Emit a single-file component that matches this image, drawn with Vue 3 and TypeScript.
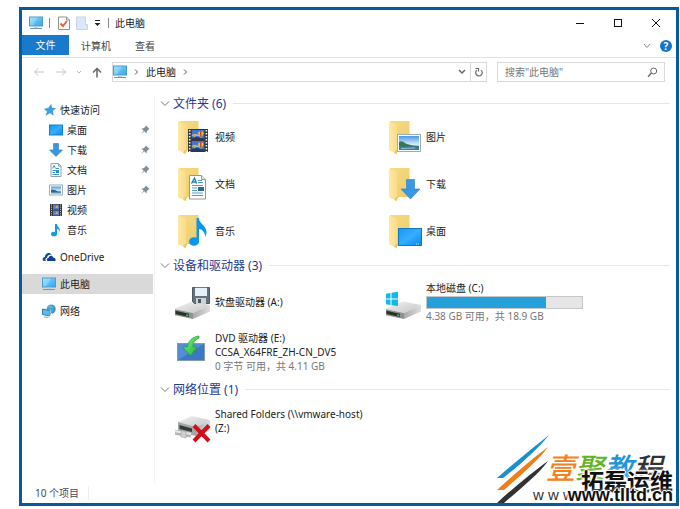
<script setup lang="ts">
interface NavItem {
  label: string
  icon: string
  pinned?: boolean
}

interface Tile {
  icon: string
  lines: string[]
  detail?: string
  used?: number
}

interface Group {
  title: string
  kind: string
  tiles: Tile[]
}

const quickAccess: NavItem[] = [
  { label: '桌面', icon: 's-desktop', pinned: true },
  { label: '下载', icon: 's-download', pinned: true },
  { label: '文档', icon: 's-doc', pinned: true },
  { label: '图片', icon: 's-picture', pinned: true },
  { label: '视频', icon: 's-video' },
  { label: '音乐', icon: 's-music' },
]

const groups: Group[] = [
  {
    title: '文件夹 (6)',
    kind: 'folders',
    tiles: [
      { icon: 'l-video', lines: ['视频'] },
      { icon: 'l-picture', lines: ['图片'] },
      { icon: 'l-doc', lines: ['文档'] },
      { icon: 'l-download', lines: ['下载'] },
      { icon: 'l-music', lines: ['音乐'] },
      { icon: 'l-desktop', lines: ['桌面'] },
    ],
  },
  {
    title: '设备和驱动器 (3)',
    kind: 'devices',
    tiles: [
      { icon: 'l-floppy', lines: ['软盘驱动器 (A:)'] },
      { icon: 'l-system', lines: ['本地磁盘 (C:)'], used: 77, detail: '4.38 GB 可用，共 18.9 GB' },
      { icon: 'l-dvd', lines: ['DVD 驱动器 (E:)', 'CCSA_X64FRE_ZH-CN_DV5'], detail: '0 字节 可用，共 4.11 GB' },
    ],
  },
  {
    title: '网络位置 (1)',
    kind: 'network',
    tiles: [{ icon: 'l-netdrive', lines: ['Shared Folders (\\\\vmware-host)', '(Z:)'] }],
  },
]
</script>

<template>
  <svg class="defs" aria-hidden="true">
    <defs>
      <linearGradient id="g-screen" x1="0" y1="0" x2="1" y2="1">
        <stop offset="0" stop-color="#8fdcff" /><stop offset=".5" stop-color="#5cc0f4" /><stop offset="1" stop-color="#3aa4e4" />
      </linearGradient>
      <linearGradient id="g-desk" x1="0" y1="0" x2="1" y2="1">
        <stop offset="0" stop-color="#1698f5" /><stop offset=".5" stop-color="#36adff" /><stop offset="1" stop-color="#078af0" />
      </linearGradient>
      <linearGradient id="g-back" x1="0" y1="0" x2="1" y2="1">
        <stop offset="0" stop-color="#f6dc85" /><stop offset="1" stop-color="#efcb69" />
      </linearGradient>
      <linearGradient id="g-front" x1="0" y1="0" x2="1" y2="0">
        <stop offset="0" stop-color="#ffe9a6" /><stop offset="1" stop-color="#fbdc88" />
      </linearGradient>
      <linearGradient id="g-top" x1="0" y1="0" x2="1" y2="1">
        <stop offset="0" stop-color="#f3f3f3" /><stop offset="1" stop-color="#c4c4c6" />
      </linearGradient>
      <linearGradient id="g-side" x1="0" y1="0" x2="1" y2="0">
        <stop offset="0" stop-color="#a9a9ab" /><stop offset="1" stop-color="#dededf" />
      </linearGradient>
      <linearGradient id="g-sky" x1="0" y1="0" x2="0" y2="1">
        <stop offset="0" stop-color="#4a9ae6" /><stop offset=".6" stop-color="#d4ecfa" /><stop offset="1" stop-color="#5793bd" />
      </linearGradient>
      <linearGradient id="g-green" x1="0" y1="0" x2="1" y2="1">
        <stop offset="0" stop-color="#8df08c" /><stop offset="1" stop-color="#12b52b" />
      </linearGradient>
    </defs>

    <symbol id="monitor" viewBox="0 0 14 14">
      <rect x=".5" y="1" width="13" height="9" fill="url(#g-screen)" stroke="#4b9cc8" />
      <path d="M1 1.500H9L4 9.500H1Z" fill="#fff" opacity=".22" />
      <path d="M5 10.500H9V12H5Z" fill="#b9d1df" /><path d="M1 12.500H13" stroke="#7797a8" />
    </symbol>
    <symbol id="s-desktop" viewBox="0 0 14 14"><rect x=".5" y="2" width="13" height="10" fill="url(#g-desk)" stroke="#1680cf" /></symbol>
    <symbol id="s-download" viewBox="0 0 14 14"><path d="M4.500 .5H9.500V7H13.500L7 13.500L.5 7H4.500Z" fill="#3c96df" stroke="#2c7fc4" stroke-width=".6" /></symbol>
    <symbol id="s-doc" viewBox="0 0 14 14">
      <path d="M2 .5H9.500L12 3V13.500H2Z" fill="#fff" stroke="#95a2aa" /><path d="M9.500 .5V3H12" fill="none" stroke="#95a2aa" />
      <path d="M3.500 5.500L5 2.500L6.500 5.500M7 5.500H10M3.500 7.500H10M3.500 9.500H6M3.500 11.500H10" fill="none" stroke="#399cc7" />
      <rect x="7" y="8" width="3" height="2" fill="#3b84ae" />
    </symbol>
    <symbol id="s-picture" viewBox="0 0 14 14">
      <rect x=".5" y="2" width="13" height="10" fill="#fff" stroke="#9dabb3" /><rect x="2" y="3.500" width="10" height="7" fill="url(#g-sky)" />
      <path d="M2 6.500L6 7L9 8.500H12V9.500H2Z" fill="#31678a" />
    </symbol>
    <symbol id="s-video" viewBox="0 0 14 14">
      <rect x="1" y="1" width="12" height="12" fill="#34363b" /><rect x="4" y="1.500" width="6" height="5" fill="#567cc2" /><rect x="4" y="7.500" width="6" height="5" fill="#567cc2" />
      <path d="M2.500 1.500V13M11.500 1.500V13" stroke="#d6d6d6" stroke-dasharray="1 1.200" /><path d="M6 5L8 2L9.500 5ZM6 11L8 8L9.500 11Z" fill="#e1a63a" />
    </symbol>
    <symbol id="s-music" viewBox="0 0 14 14">
      <ellipse cx="5" cy="11" rx="3" ry="2.300" fill="#149be6" /><path d="M6 11V1H8C8 4 12 5 11 9C10.500 7 9.500 6 8 6V11Z" fill="#149be6" />
    </symbol>
    <symbol id="star" viewBox="0 0 12 12"><path d="M7 .5L7.700 4L11.500 4.500L8.500 6.800L9.200 11L6 8.800L2 11.200L3.500 7.500L.5 5L4.500 4.200Z" fill="#36a3e8" stroke="#2280c3" stroke-width=".5" /></symbol>
    <symbol id="cloud" viewBox="0 0 14 14">
      <path d="M1 10.500C0 8.500 1.500 7 3 7C3 3 8 1.500 9.500 5C7 4 5 6 5 8C3 8 3 10 4 11H2Z" fill="#0b4ba5" />
      <path d="M5.500 11C4 9 5.500 8 6.500 8C7 5 11 5 11 7.500C13 7.500 14 9 13.500 11Z" fill="#123f91" />
    </symbol>
    <symbol id="network" viewBox="0 0 14 14">
      <circle cx="9.200" cy="5" r="4.600" fill="#4aa6d6" /><path d="M6 2C8 1 9 4 12 3" fill="none" stroke="#7fcbea" /><path d="M10 1C13 4 13 7 10.500 9.500" fill="none" stroke="#2f81ae" />
      <path d="M.5 5L7.500 6.500V12L.5 10.500Z" fill="#5cbef0" stroke="#377ca0" /><path d="M7.500 6.500L9 5.500V11L7.500 12Z" fill="#a6c2d0" /><path d="M2 13L6.500 13.500" stroke="#8aa9b9" />
    </symbol>
    <symbol id="pin" viewBox="0 0 10 10"><path d="M6 .5L9.500 4L8.500 4.500L6.800 6.300L6.500 8.500L4.300 6.300L1 9.200L3.700 5.700L1.500 3.500L3.700 3.200L5.500 1.500Z" fill="#818c94" /></symbol>

    <symbol id="folder" viewBox="0 0 36 36">
      <path d="M4 2H23.500V31H9Z" fill="url(#g-back)" /><path d="M3 2.500L11 6V34.500L3 31.500Z" fill="url(#g-front)" />
      <path d="M8 34L11 35V33.500L12.500 31H10Z" fill="#edc65f" />
    </symbol>
    <symbol id="balloons" viewBox="0 0 13 10">
      <rect width="13" height="10" fill="#3e77cf" /><path d="M0 5L5 4L9 6H0Z" fill="#8fbfee" />
      <path d="M0 8L5 7L13 8.500V10H0Z" fill="#263a60" />
      <path d="M6.500 3.500C6.500 0 12 0 12 3.500L10 7.500H8.500Z" fill="#f0bf38" /><path d="M8.300 1H10V7H8.700Z" fill="#c54330" /><path d="M1 5.500C1 3 4.500 3 4.500 5.500L3 7.500Z" fill="#dfa34a" />
    </symbol>
    <symbol id="l-video" viewBox="0 0 36 36">
      <use href="#folder" /><rect x="13" y="10" width="20" height="23" fill="#33353a" />
      <path d="M14.700 11V33M31.400 11V33" stroke="#efefef" stroke-width="1.600" stroke-dasharray="1.600 1.400" />
      <use href="#balloons" x="16.500" y="11" width="13" height="10" /><use href="#balloons" x="16.500" y="22" width="13" height="10" />
    </symbol>
    <symbol id="l-picture" viewBox="0 0 36 36">
      <use href="#folder" /><rect x="11.500" y="15.500" width="23" height="17" fill="#fff" stroke="#9fabb2" />
      <rect x="13" y="17" width="20" height="14" fill="url(#g-sky)" /><path d="M13 23C16 21 18 24 21 25C25 26 28 27 33 27V28H13Z" fill="#397653" /><path d="M13 27.500H33V31H13Z" fill="#397ca5" /><path d="M15 29.500L29 29" stroke="#8dc5da" />
    </symbol>
    <symbol id="l-doc" viewBox="0 0 36 36">
      <use href="#folder" /><path d="M14.500 9.500H26.500L30.500 13.500V33H14.500Z" fill="#fff" stroke="#8d989f" /><path d="M26.500 9.500V13.500H30.500" fill="#e5edf1" stroke="#8d989f" />
      <path d="M16.500 17.500L19.500 12L21.500 17.500M17.500 16H21" fill="none" stroke="#1980bd" stroke-width="1.300" />
      <path d="M23 14.500H27M23 16.500H28M17 19.500H28M17 22H22M17 24.500H22M17 27H28M17 29.500H28" stroke="#4f9fc3" /><rect x="23" y="21" width="6" height="4" fill="#32658b" />
    </symbol>
    <symbol id="l-download" viewBox="0 0 36 36"><use href="#folder" /><path d="M20.500 13.500H28.500V23H34L24.500 33L15 23H20.500Z" fill="#3797e3" stroke="#2882cb" stroke-width=".6" /></symbol>
    <symbol id="l-music" viewBox="0 0 36 36">
      <use href="#folder" /><ellipse cx="19" cy="28.500" rx="5" ry="4.300" fill="#0a96ec" /><path d="M21.500 29V5H24C24 12 35 13 30.500 24C30 19 27 16 24 16V28.500Z" fill="#0a96ec" />
    </symbol>
    <symbol id="l-desktop" viewBox="0 0 36 36"><use href="#folder" /><rect x="12.500" y="15.500" width="23" height="17" fill="url(#g-desk)" stroke="#1477be" /><path d="M30 31H34" stroke="#b4e2ff" stroke-dasharray="1 1" /></symbol>

    <symbol id="drive" viewBox="0 0 36 36">
      <path d="M-1 25L17 17.500L35 21L18 29Z" fill="url(#g-top)" /><path d="M18 29L35 21V27.500L18 35Z" fill="url(#g-side)" />
      <path d="M-1 25L18 29V35L-1 31Z" fill="#909092" /><path d="M.5 26.800L14 29.700V33L.5 30Z" fill="#273129" /><path d="M11 30.200L13.500 30.800V32.300L11 31.800Z" fill="#39c451" />
    </symbol>
    <symbol id="l-floppy" viewBox="0 0 36 36">
      <use href="#drive" /><path d="M17.500 3.500H34.500V19.500H19.500L17.500 17.500Z" fill="#65717c" stroke="#4d5963" />
      <rect x="20" y="3" width="12" height="9" fill="#e4f1f9" /><path d="M20 3.500H32" stroke="#378fc3" /><rect x="21" y="14" width="10" height="6" fill="#cfd3d6" /><rect x="23" y="15" width="3" height="4" fill="#4b565e" />
    </symbol>
    <symbol id="l-system" viewBox="0 0 36 36"><use href="#drive" /><path d="M-1 10L4.500 9V14.500H-1ZM5.500 8.800L12 7.800V14.500H5.500ZM-1 15.500H4.500V21L-1 20.200ZM5.500 15.500H12V22L5.500 21.200Z" fill="#14b7ea" /></symbol>
    <symbol id="l-dvd" viewBox="0 0 36 36">
      <rect x="2.500" y="9.500" width="27" height="17" fill="#3d78c4" stroke="#829bad" /><path d="M3 10H29L3 26Z" fill="#6aa4df" opacity=".5" />
      <path d="M24 2C17 3 13 7 12.500 13H8L15.500 22L22 13H18C18 8 20 6 24 4Z" fill="url(#g-green)" stroke="#16a42d" stroke-width=".7" />
    </symbol>
    <symbol id="l-netdrive" viewBox="0 0 36 36">
      <path d="M3 15L17 9L35 13L21 20Z" fill="url(#g-top)" /><path d="M21 20L35 13V23L21 29Z" fill="url(#g-side)" /><path d="M3 15L21 20V29L3 25Z" fill="#a6a6a8" /><path d="M4.500 18L17 21.500V25L4.500 22Z" fill="#353b39" />
      <path d="M-2 25L16 28" stroke="#b3b5b7" stroke-width="5" /><path d="M-2 24L16 27" stroke="#e8e8e8" stroke-width="2" /><path d="M6 23.500L11 24.500V31L6 30Z" fill="#cfd0d2" stroke="#999" stroke-width=".5" />
      <path d="M19 18.500L34 34M34 18.500L19 34" stroke="#d10f1c" stroke-width="4" />
    </symbol>
  </svg>

  <div class="window">
    <header class="titlebar">
      <svg class="i14"><use href="#monitor" /></svg>
      <span class="sep"></span>
      <div class="quick">
        <button class="plain" aria-label="属性">
          <svg width="12" height="14" viewBox="0 0 12 14"><path d="M.5 1H8.500L11.500 4V13.500H.5Z" fill="#fff" stroke="#919191" /><path d="M8.500 1V4H11.500" fill="none" stroke="#919191" /><path d="M2.500 7.500L5 10L9 5" fill="none" stroke="#de6538" stroke-width="2" /></svg>
        </button>
        <button class="plain" aria-label="新建文件夹">
          <svg width="12" height="14" viewBox="0 0 12 14"><path d="M.5 1H9.500V8.500H11.500V13.500H.5Z" fill="#dce8f7" stroke="#c5d6eb" /></svg>
        </button>
        <button class="plain" aria-label="自定义快速访问工具栏">
          <svg width="7" height="8" viewBox="0 0 7 8"><path d="M1 1.500H6" stroke="#222" /><path d="M.5 4H6.500L3.500 7Z" fill="#222" /></svg>
        </button>
      </div>
      <span class="sep"></span>
      <h1 class="caption">此电脑</h1>
      <button class="ctl" aria-label="最小化"><svg class="i10" viewBox="0 0 10 10"><path d="M1 5.500H9" stroke="#111" /></svg></button>
      <button class="ctl" aria-label="最大化"><svg class="i10" viewBox="0 0 10 10"><rect x="1.500" y="1.500" width="7" height="7" fill="none" stroke="#111" /></svg></button>
      <button class="ctl" aria-label="关闭"><svg class="i10" viewBox="0 0 10 10"><path d="M1 1L9 9M9 1L1 9" stroke="#111" /></svg></button>
    </header>

    <nav class="tabs" aria-label="功能区">
      <button class="tab file">文件</button>
      <button class="tab">计算机</button>
      <button class="tab">查看</button>
      <button class="plain expand" aria-label="展开功能区"><svg width="8" height="6" viewBox="0 0 8 6"><path d="M1 1L4 4.500L7 1" fill="none" stroke="#8e8e8e" /></svg></button>
      <button class="help" aria-label="帮助">?</button>
    </nav>

    <div class="toolbar">
      <div class="history">
        <button class="plain" aria-label="后退"><svg width="12" height="10" viewBox="0 0 12 10"><path d="M11 5H1.500M5 1.500L1.500 5L5 8.500" fill="none" stroke="#c4c4c4" /></svg></button>
        <button class="plain" aria-label="前进"><svg width="12" height="10" viewBox="0 0 12 10"><path d="M1 5H10.500M7 1.500L10.500 5L7 8.500" fill="none" stroke="#c4c4c4" /></svg></button>
        <button class="plain" aria-label="最近位置"><svg width="6" height="6" viewBox="0 0 6 6"><path d="M1 2L3 4L5 2" fill="none" stroke="#bbb" /></svg></button>
        <button class="plain" aria-label="上移"><svg width="10" height="11" viewBox="0 0 10 11"><path d="M5 10.500V1.500M1 5.500L5 1.500L9 5.500" fill="none" stroke="#666" stroke-width="1.500" /></svg></button>
      </div>
      <div class="address">
        <svg class="i14"><use href="#monitor" /></svg>
        <svg class="crumb" viewBox="0 0 5 8"><path d="M1 1.500L3.500 4L1 6.500" fill="none" stroke="#555" /></svg>
        <a href="#">此电脑</a>
        <svg class="crumb" viewBox="0 0 5 8"><path d="M1 1.500L3.500 4L1 6.500" fill="none" stroke="#555" /></svg>
        <button class="plain drop" aria-label="以前的位置"><svg width="8" height="6" viewBox="0 0 8 6"><path d="M1 1L4 4L7 1" fill="none" stroke="#666" stroke-width="1.500" /></svg></button>
        <button class="refresh" aria-label="刷新"><svg class="i10" viewBox="0 0 10 10"><path d="M2.800 3.200A3.300 3.300 0 1 0 7 3.100M1.500 1.500H4.500V4.500" fill="none" stroke="#666" stroke-width="1.200" /></svg></button>
      </div>
      <label class="search">
        <input type="text" placeholder="搜索&quot;此电脑&quot;" aria-label="搜索此电脑" />
        <svg width="11" height="11" viewBox="0 0 11 11"><circle cx="6.700" cy="4" r="3" fill="none" stroke="#666" /><path d="M4.500 6L1 9.800" stroke="#666" stroke-width="1.300" /></svg>
      </label>
    </div>

    <div class="body">
      <aside class="sidebar">
        <div class="branch">
          <a class="node root" href="#"><svg class="i12"><use href="#star" /></svg>快速访问</a>
          <a v-for="item in quickAccess" :key="item.label" class="node child" href="#">
            <svg class="i14"><use :href="'#' + item.icon" /></svg>{{ item.label }}
            <svg v-if="item.pinned" class="i10 pin"><use href="#pin" /></svg>
          </a>
        </div>
        <a class="node" href="#"><svg class="i14"><use href="#cloud" /></svg>OneDrive</a>
        <a class="node selected" href="#"><svg class="i14"><use href="#monitor" /></svg>此电脑</a>
        <a class="node" href="#"><svg class="i14"><use href="#network" /></svg>网络</a>
      </aside>

      <main class="content">
        <section v-for="group in groups" :key="group.kind">
          <h2 class="group">
            <svg width="10" height="8" viewBox="0 0 10 8"><path d="M1 1.500L5 5.500L9 1.500" fill="none" stroke="#777" /></svg>
            {{ group.title }}
          </h2>
          <div class="tiles" :class="group.kind">
            <a v-for="tile in group.tiles" :key="tile.icon" class="tile" href="#">
              <svg class="large"><use :href="'#' + tile.icon" /></svg>
              <span class="info">
                <span v-for="line in tile.lines" :key="line">{{ line }}</span>
                <span v-if="tile.used" class="meter"><span class="fill" :style="{ width: tile.used + '%' }"></span></span>
                <span v-if="tile.detail" class="detail">{{ tile.detail }}</span>
              </span>
            </a>
          </div>
        </section>
      </main>
    </div>

    <footer class="status"><span>10 个项目</span></footer>
  </div>

  <div class="watermark">
    <svg class="streaks" viewBox="0 0 54 70">
      <path d="M52 1C38 12 16 30 0 44H6C24 30 42 14 52 1Z" fill="#198fd0" />
      <path d="M51 13C36 24 16 41 0 56H7C24 41 42 26 51 13Z" fill="#ef7d18" />
      <path d="M51 27C36 38 16 54 0 69H7C23 55 42 40 51 27Z" fill="#303236" />
    </svg>
    <div class="brand"><span class="orange">壹</span><span class="green">聚</span><span class="blue">教</span><span class="dark">程</span></div>
    <div class="www">w w w .</div>
    <div class="owner">拓磊运维</div>
    <div class="site">www.tlltd.cn</div>
  </div>
</template>

<style>
body {
  margin: 0;
  background: #fff;
}
#app {
  position: relative;
  box-sizing: border-box;
  display: flex;
  min-height: 100vh;
  padding: 7px 1px 3px 19px;
}
</style>

<style scoped>
.defs {
  position: absolute;
  width: 0;
  height: 0;
}
.window,
.watermark {
  font-family: "Noto Sans", "Noto Sans CJK SC", sans-serif;
}
.window {
  display: flex;
  flex: 1;
  flex-direction: column;
  border: 3px solid #075a9f;
  background: #fff;
  color: #222;
  font-size: 10px;
  line-height: 14px;
}
svg {
  display: block;
  flex: none;
}
a {
  color: inherit;
  text-decoration: none;
}
button {
  display: flex;
  align-items: center;
  justify-content: center;
  padding: 0;
  border: 0;
  background: none;
  color: inherit;
  font: inherit;
}
.i14 { width: 14px; height: 14px; }
.i12 { width: 12px; height: 12px; }
.i10 { width: 10px; height: 10px; }

.titlebar {
  display: flex;
  align-items: center;
  height: 25px;
  gap: 6px;
  padding-left: 7px;
}
.quick {
  display: flex;
  align-items: center;
  gap: 6px;
  padding: 0 1px 0 2px;
}
.sep {
  width: 1px;
  height: 10px;
  background: #888;
}
.caption {
  flex: 1;
  margin: 0;
  font-size: 10px;
  font-weight: 400;
}
.ctl {
  width: 38px;
  height: 24px;
  margin-left: -6px;
}
.ctl:last-child {
  margin-right: 1px;
}

.tabs {
  display: flex;
  align-items: center;
  height: 22px;
  border-bottom: 1px solid #e2e2e2;
}
.tab {
  height: 20px;
  padding: 0 12px;
  color: #444;
}
.file {
  align-self: flex-start;
  width: 47px;
  background: #1979ca;
  color: #fff;
}
.expand {
  margin-left: auto;
}
.help {
  width: 12px;
  height: 12px;
  margin: 0 4px 0 9px;
  border-radius: 50%;
  background: #1375cb;
  color: #fff;
  font-weight: 700;
}

.toolbar {
  display: flex;
  align-items: center;
  gap: 10px;
  height: 28px;
  padding-right: 11px;
}
.history {
  display: flex;
  align-items: center;
  justify-content: space-between;
  box-sizing: border-box;
  width: 80px;
  padding: 0 0 0 11px;
}
.address,
.search {
  display: flex;
  align-items: center;
  box-sizing: border-box;
  height: 20px;
  border: 1px solid #d9d9d9;
}
.address {
  flex: 1;
  gap: 7px;
}
.crumb {
  width: 5px;
  height: 8px;
}
.drop {
  margin-left: auto;
}
.refresh {
  align-self: stretch;
  width: 16px;
  margin-left: -3px;
  border-left: 1px solid #d9d9d9;
}
.search {
  width: 168px;
  padding: 0 6px 0 7px;
}
.search input {
  flex: 1;
  min-width: 0;
  padding: 0;
  border: 0;
  outline: 0;
  background: none;
  font: inherit;
}
.search input::placeholder {
  color: #777;
  opacity: 1;
}

.body {
  display: flex;
  flex: 1;
  padding-top: 9px;
}
.sidebar {
  display: flex;
  flex-direction: column;
  gap: 7px;
  width: 132px;
  padding-top: 5px;
  border-right: 1px solid #f3f3f3;
}
.node {
  display: flex;
  align-items: center;
  gap: 4px;
  height: 20px;
  margin-right: 1px;
  padding-left: 20px;
}
.root {
  padding-left: 22px;
}
.child {
  padding-left: 27px;
}
.pin {
  margin: 0 3px 0 auto;
}
.selected {
  background: #d9d9d9;
}

.content {
  flex: 1;
  padding: 0 6px 0 5px;
}
.group {
  display: flex;
  align-items: center;
  gap: 3px;
  margin: 0;
  color: #26388f;
  font-size: 12px;
  font-weight: 400;
  line-height: 17px;
}
.group::after {
  content: "";
  flex: 1;
  height: 1px;
  margin-left: 4px;
  background: #e3e6ea;
}
.tiles {
  display: grid;
  grid-template-columns: 211px 1fr;
  grid-auto-rows: 50px;
  padding: 3px 0 4px 15px;
}
.folders {
  grid-auto-rows: 47px;
  padding: 1px 0 3px 15px;
}
.tile {
  display: flex;
  align-items: center;
  gap: 4px;
}
.network .tile {
  align-items: flex-start;
  padding-top: 6px;
}
.large {
  width: 36px;
  height: 36px;
  overflow: visible;
}
.info {
  display: flex;
  flex-direction: column;
  white-space: nowrap;
}
.meter {
  box-sizing: border-box;
  width: 157px;
  height: 13px;
  margin-top: 1px;
  border: 1px solid #c6c6c6;
  background: #e6e6e6;
}
.fill {
  display: block;
  height: 100%;
  background: #26a0da;
}
.detail {
  color: #777;
}

.status {
  display: flex;
  align-items: center;
  height: 20px;
  padding-left: 13px;
  color: #3e4a5c;
}
.status span {
  padding-right: 9px;
  border-right: 1px solid #eee;
}

.watermark {
  position: absolute;
  right: 4px;
  bottom: 1px;
  width: 179px;
  height: 74px;
  white-space: nowrap;
  pointer-events: none;
}
.watermark > * {
  position: absolute;
}
.streaks {
  left: 0;
  top: 0;
  width: 54px;
  height: 70px;
}
.brand {
  left: 49px;
  top: 18px;
  font-size: 29px;
  font-style: italic;
  font-weight: 500;
  line-height: 32px;
}
.orange { color: #f58220; }
.green { color: #62b51c; }
.blue { color: #2095d5; }
.dark { color: #333; }
.www {
  left: 36px;
  bottom: 4px;
  color: #333;
  font-family: "Liberation Sans", sans-serif;
  font-size: 15px;
  line-height: 18px;
}
.owner,
.site {
  right: 3px;
  color: #111;
  font-weight: 700;
  text-shadow: 1px 0 #fff, -1px 0 #fff, 0 1px #fff, 0 -1px #fff, 0 0 3px #fff, 0 0 4px #fff;
}
.owner {
  bottom: 15px;
  font-size: 23px;
  line-height: 24px;
}
.site {
  bottom: 3px;
  font-family: "Liberation Sans", sans-serif;
  font-size: 18px;
  line-height: 20px;
}
</style>
